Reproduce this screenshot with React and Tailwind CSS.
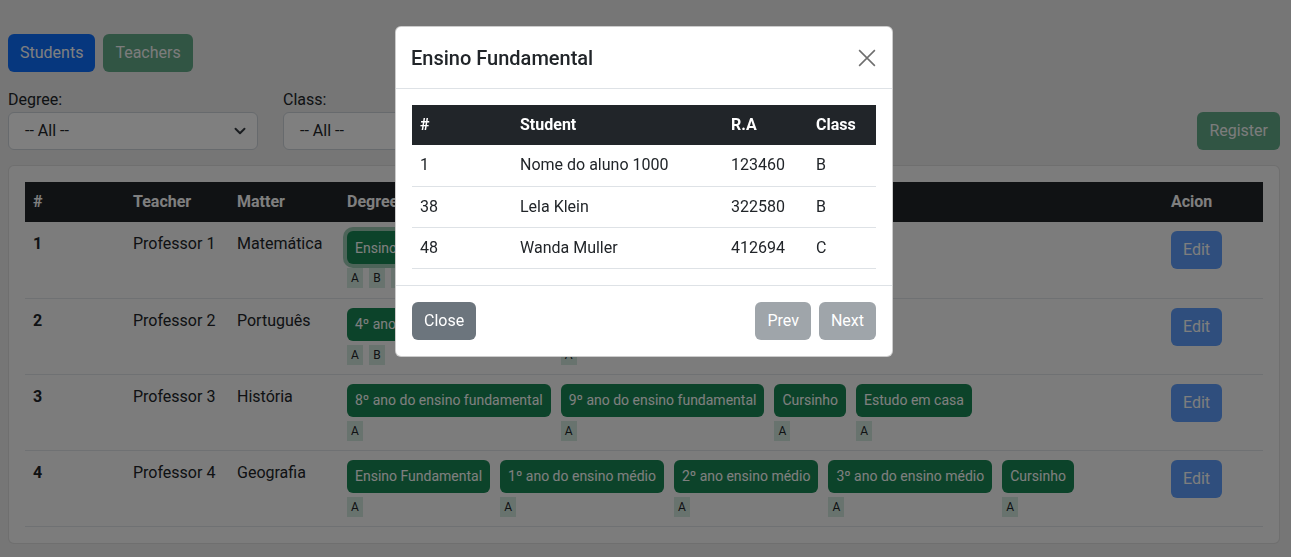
import React from 'react'

const FONT = { fontFamily: 'Roboto, "Noto Sans", Arial, sans-serif' }

const TEACHERS = [
  {
    id: 1, name: 'Professor 1', matter: 'Matemática',
    degrees: [
      { label: 'Ensino Fundamental', classes: ['A', 'B', 'C'], focus: true },
    ],
  },
  {
    id: 2, name: 'Professor 2', matter: 'Português',
    degrees: [
      { label: '4º ano do ensino fundamental', classes: ['A', 'B'] },
      { label: '5º ano do ensino fundamental', classes: ['A'] },
    ],
  },
  {
    id: 3, name: 'Professor 3', matter: 'História',
    degrees: [
      { label: '8º ano do ensino fundamental', classes: ['A'] },
      { label: '9º ano do ensino fundamental', classes: ['A'] },
      { label: 'Cursinho', classes: ['A'] },
      { label: 'Estudo em casa', classes: ['A'] },
    ],
  },
  {
    id: 4, name: 'Professor 4', matter: 'Geografia',
    degrees: [
      { label: 'Ensino Fundamental', classes: ['A'] },
      { label: '1º ano do ensino médio', classes: ['A'] },
      { label: '2º ano ensino médio', classes: ['A'] },
      { label: '3º ano do ensino médio', classes: ['A'] },
      { label: 'Cursinho', classes: ['A'] },
    ],
  },
]

const STUDENTS = [
  { id: 1, name: 'Nome do aluno 1000', ra: '123460', cls: 'B' },
  { id: 38, name: 'Lela Klein', ra: '322580', cls: 'B' },
  { id: 48, name: 'Wanda Muller', ra: '412694', cls: 'C' },
]

function Select({ label }) {
  return (
    <div className="w-[250px]">
      <div className="leading-6 text-[#212529]">{label}</div>
      <div className="flex items-center justify-between h-[38px] rounded-md border border-[#ced4da] bg-white pl-4 pr-[11px] text-[#212529]">
        <span>-- All --</span>
        <svg width="12" height="12" viewBox="0 0 16 16" fill="none" stroke="#343a40" strokeWidth="2.6" strokeLinecap="round" strokeLinejoin="round">
          <path d="M2 5l6 6 6-6" />
        </svg>
      </div>
    </div>
  )
}

function DegreeItem({ d }) {
  return (
    <div className="flex flex-col items-start">
      <span className={`inline-flex items-center h-[33px] px-2 rounded-md bg-[#198754] text-white text-sm whitespace-nowrap ${d.focus ? 'ring-4 ring-[#3c996e]/50' : ''}`}>
        {d.label}
      </span>
      <div className="flex gap-1.5 mt-1">
        {d.classes.map(c => (
          <span key={c} className="w-4 h-5 flex items-center justify-center bg-[#d1e7dd] text-xs text-[#212529]">{c}</span>
        ))}
      </div>
    </div>
  )
}

export default function App() {
  return (
    <div className="relative min-h-[557px] bg-[#ececec] text-base text-[#212529]" style={FONT}>
      <div className="pl-2 pr-[11px] pt-[34px]">
        {/* Tabs */}
        <div className="flex gap-2">
          <button className="h-[38px] px-3 rounded-md bg-[#0d6efd] text-white">Students</button>
          <button className="h-[38px] px-3 rounded-md bg-[#198754] text-white opacity-65">Teachers</button>
        </div>

        {/* Filters */}
        <div className="flex items-end mt-4">
          <div className="flex gap-[25px]">
            <Select label="Degree:" />
            <Select label="Class:" />
          </div>
          <button className="ml-auto h-[38px] px-3 rounded-md bg-[#198754] text-white opacity-65">Register</button>
        </div>

        {/* Teachers table */}
        <div className="mt-[15px] rounded-md border border-black/10 bg-[#f8f8f8] p-4">
          <table className="w-full table-fixed border-collapse">
            <colgroup>
              <col className="w-[100px]" />
              <col className="w-[104px]" />
              <col className="w-[110px]" />
              <col />
              <col className="w-[100px]" />
            </colgroup>
            <thead>
              <tr className="bg-[#212529] text-white text-left h-10">
                <th className="px-2 font-bold">#</th>
                <th className="px-2 font-bold">Teacher</th>
                <th className="px-2 font-bold">Matter</th>
                <th className="px-2 font-bold">Degree</th>
                <th className="px-2 font-bold">Acion</th>
              </tr>
            </thead>
            <tbody>
              {TEACHERS.map(t => (
                <tr key={t.id} className="border-b border-[#dee2e6] align-top h-[76px]">
                  <td className="px-2 pt-[10px] font-bold">{t.id}</td>
                  <td className="px-2 pt-[10px]">{t.name}</td>
                  <td className="px-2 pt-[10px]">{t.matter}</td>
                  <td className="px-2 pt-[9px] pb-2">
                    <div className="flex flex-wrap gap-[10px]">
                      {t.degrees.map((d, i) => <DegreeItem key={i} d={d} />)}
                    </div>
                  </td>
                  <td className="px-2 pt-[9px]">
                    <button className="h-[38px] px-3 rounded-md bg-[#0d6efd] text-white opacity-65">Edit</button>
                  </td>
                </tr>
              ))}
            </tbody>
          </table>
        </div>
      </div>

      {/* Backdrop */}
      <div className="fixed inset-0 bg-black/50" />

      {/* Modal */}
      <div className="absolute left-[395px] top-[26px] w-[498px] rounded-md border border-black/20 bg-white">
        <div className="flex items-center justify-between h-[62px] px-4 border-b border-[#dee2e6]">
          <h5 className="text-xl font-medium leading-[30px] -ml-px">Ensino Fundamental</h5>
          <svg width="18" height="18" viewBox="0 0 16 16" stroke="#6e6e6e" strokeWidth="1.4">
            <path d="M1 1l14 14M15 1L1 15" />
          </svg>
        </div>
        <div className="p-4">
          <table className="w-full table-fixed border-collapse">
            <colgroup>
              <col className="w-[100px]" />
              <col className="w-[211px]" />
              <col className="w-[85px]" />
              <col />
            </colgroup>
            <thead>
              <tr className="bg-[#212529] text-white text-left h-10">
                <th className="px-2 font-bold">#</th>
                <th className="px-2 font-bold">Student</th>
                <th className="px-2 font-bold">R.A</th>
                <th className="px-2 font-bold">Class</th>
              </tr>
            </thead>
            <tbody>
              {STUDENTS.map(s => (
                <tr key={s.id} className="border-b border-[#dee2e6] h-[41px]">
                  <td className="px-2">{s.id}</td>
                  <td className="px-2">{s.name}</td>
                  <td className="px-2">{s.ra}</td>
                  <td className="px-2">{s.cls}</td>
                </tr>
              ))}
            </tbody>
          </table>
        </div>
        <div className="flex items-center justify-between p-3 border-t border-[#dee2e6]">
          <button className="m-1 h-[38px] px-3 rounded-md bg-[#6c757d] text-white">Close</button>
          <div className="flex">
            <button className="m-1 h-[38px] px-3 rounded-md bg-[#6c757d] text-white opacity-65">Prev</button>
            <button className="m-1 h-[38px] px-3 rounded-md bg-[#6c757d] text-white opacity-65">Next</button>
          </div>
        </div>
      </div>
    </div>
  )
}
